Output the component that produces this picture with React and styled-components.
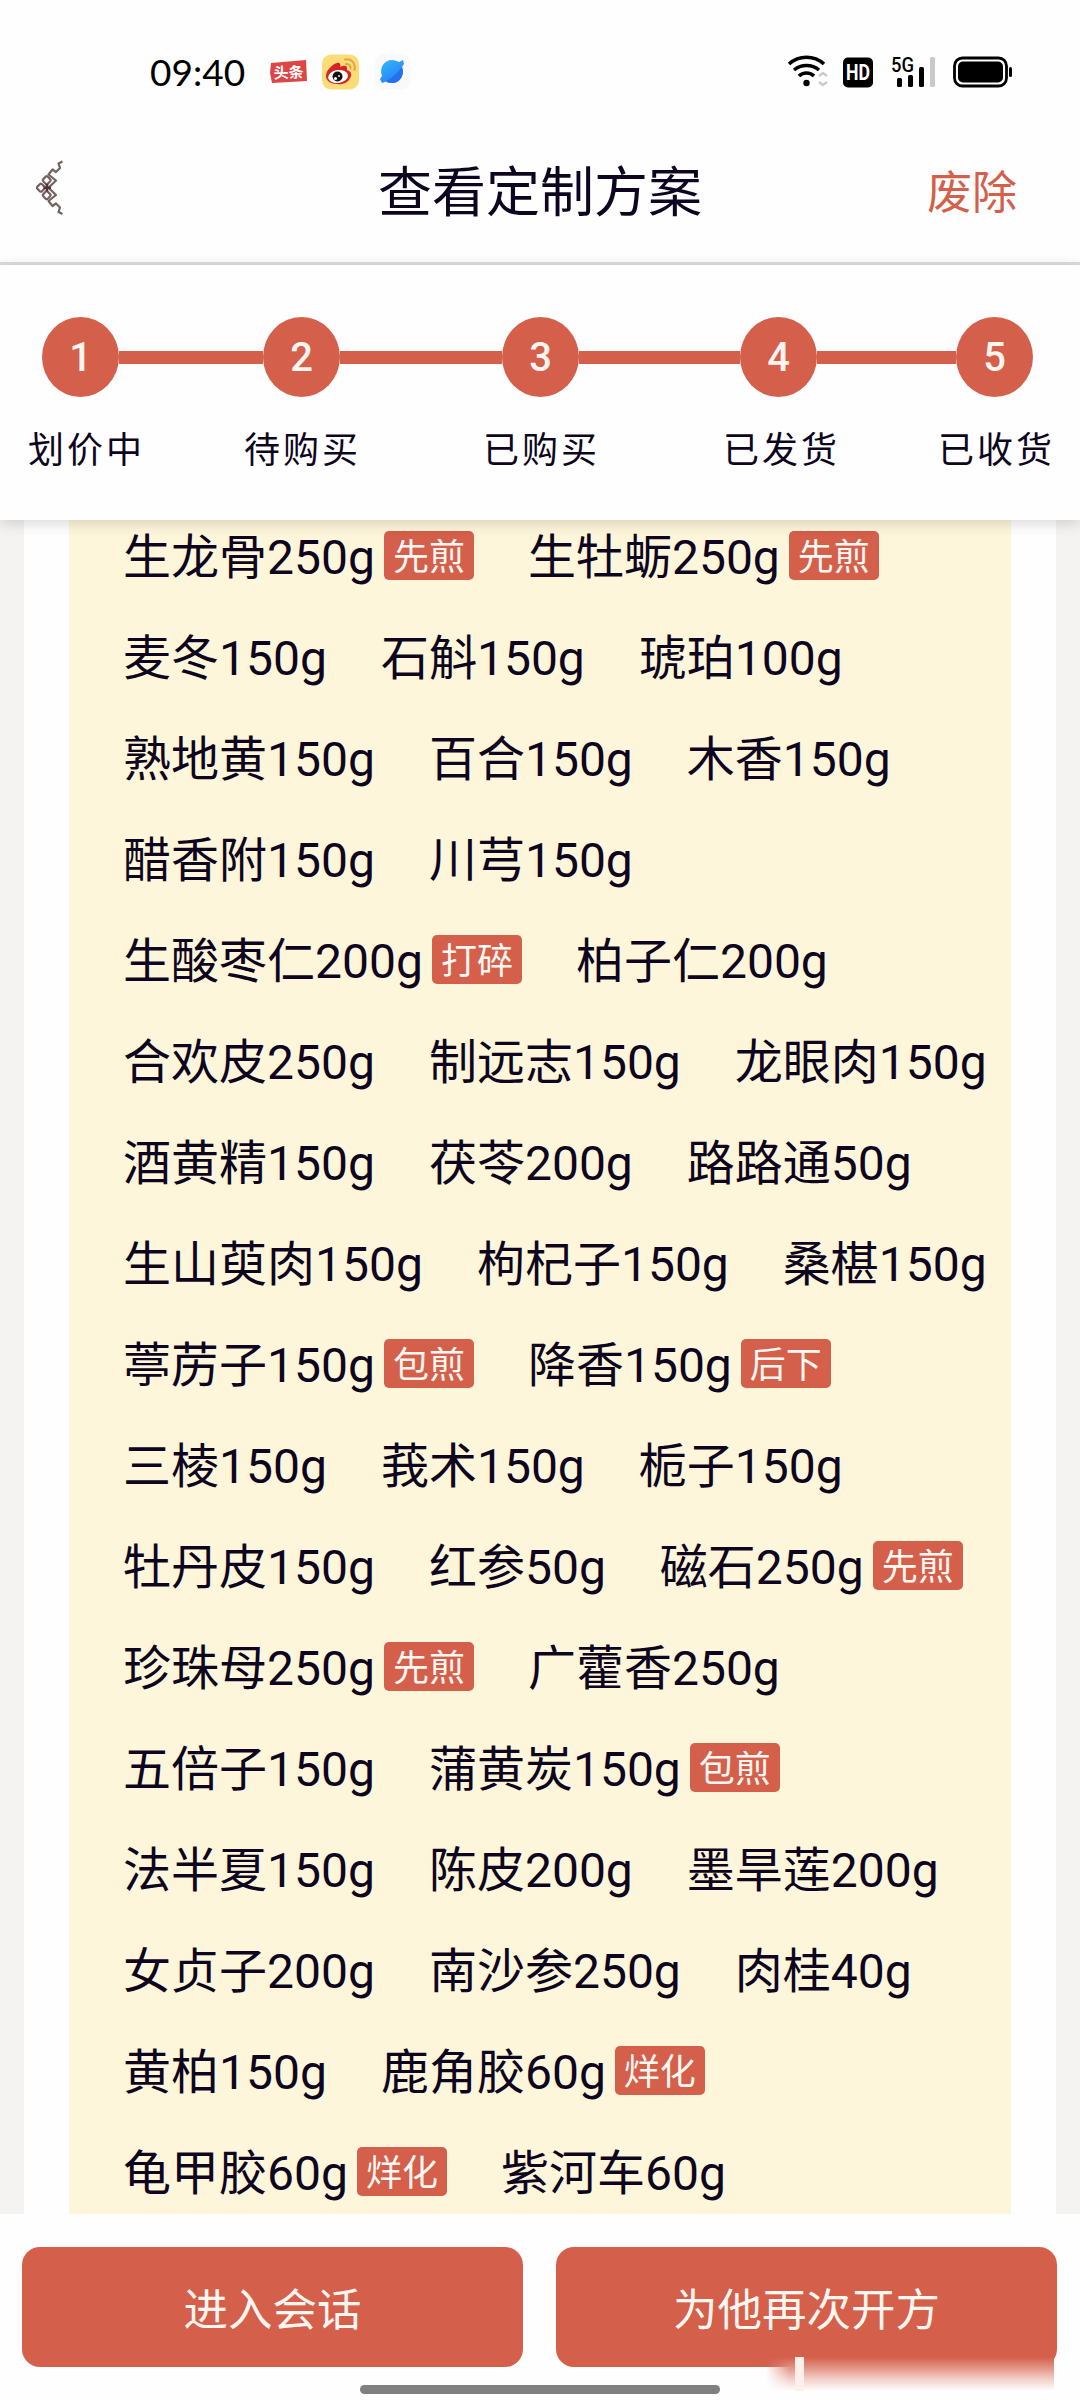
import styled, { createGlobalStyle } from "styled-components"

const GlobalStyle = createGlobalStyle`
body {
  margin: 0;
  background: #fefefe;
  font-family: Roboto, "Noto Sans CJK SC", sans-serif;
  color: #0e0620;
}
* {
  box-sizing: border-box;
}
`

const Page = styled.div`
width: 1080px;
height: 2400px;
display: flex;
flex-direction: column;
overflow: hidden;
background: #fefefe;
`

// status bar
const StatusBar = styled.div`
height: 120px;
display: flex;
align-items: center;
padding: 24px 67px 0 150px;
`
const Time = styled.span`
width: 119px;
font-family: Lato, sans-serif;
font-size: 37px;
line-height: 44px;
color: #000;
`
const AppIcons = styled.div`
display: flex;
align-items: center;
gap: 15px;
`
const Signals = styled.div`
display: flex;
align-items: center;
margin-left: auto;
`
const Signal = styled.svg`
display: block;
overflow: visible;
margin-left: ${props=>props.$gap}px;
`

// header
const Header = styled.header`
height: 145px;
display: grid;
grid-template-columns: 160px 1fr 160px;
align-items: center;
border-bottom: 3px solid #dcdedd;
`
const Back = styled.div`
padding-left: 36px;
margin-top: -3px;
`
const Title = styled.h1`
margin: 6px 0 0;
font-size: 54px;
line-height: 70px;
font-weight: 400;
text-align: center;
`
const Discard = styled.span`
margin-top: 6px;
font-size: 45px;
line-height: 60px;
color: #d45f4b;
padding-left: 7px;
`

// progress
const Progress = styled.section`
position: relative;
height: 255px;
flex-shrink: 0;
padding-top: 52px;
background: #fefefe;
box-shadow: 0 3px 14px rgba(0, 0, 0, 0.16);
`
const Track = styled.div`
display: flex;
align-items: center;
padding-left: 42px;
`
const Dot = styled.div`
width: 77px;
height: 80px;
border-radius: 50%;
background: #d45f4b;
color: #fff4ee;
font-family: Roboto, sans-serif;
font-size: 40px;
font-weight: 500;
display: flex;
align-items: center;
justify-content: center;
`
const Line = styled.div`
width: ${props=>props.$width}px;
height: 13px;
background: #d45f4b;
`
const Labels = styled.div`
display: grid;
grid-template-columns: 216px 239px 240px 215px 120px;
padding: 29px 0 0 28px;
font-size: 36px;
line-height: 50px;
letter-spacing: 3px;
`

// prescription
const Main = styled.main`
height: 1694px;
flex-shrink: 0;
padding: 0 24px;
background: #f4f3f2;
overflow: hidden;
`
const Card = styled.div`
height: 100%;
padding: 0 45px;
background: #fefefe;
`
const Herbs = styled.ul`
margin: 0;
height: 1720px;
padding: 0 0 0 54px;
list-style: none;
display: flex;
flex-wrap: wrap;
align-content: flex-start;
column-gap: 54px;
background: #fef6da;
`
const Herb = styled.li`
height: 101px;
display: flex;
align-items: flex-start;
padding-top: 8px;
font-size: 48px;
line-height: 60px;
white-space: nowrap;
`
const Tag = styled.span`
width: 90px;
height: 49px;
margin: 3px 0 0 9px;
border-radius: 5px;
background: #d45f4b;
color: #fff8f2;
font-size: 36px;
line-height: 54px;
text-align: center;
`

// footer
const Footer = styled.footer`
position: relative;
height: 186px;
flex-shrink: 0;
display: flex;
flex-direction: column;
align-items: center;
padding: 33px 23px 0 22px;
`
const Actions = styled.div`
width: 100%;
display: flex;
gap: 33px;
`
const Action = styled.button`
flex: 1;
height: 120px;
padding: 0 0 2px;
border: 0;
border-radius: 18px;
background: #d45f4b;
color: #fff6f0;
font-family: inherit;
font-size: 44.500px;
`
const HomeBar = styled.div`
width: 360px;
height: 9px;
margin-top: 18px;
border-radius: 5px;
background: #808080;
`
const Smear = styled.div`
position: absolute;
left: 766px;
top: 143px;
width: 288px;
height: 34px;
background: linear-gradient(#d45f4b, #e39a8c 35%, #f3cfc8 65%, #fefefe);
mask-image: linear-gradient(90deg, transparent, #000 24px);
`
const Streak = styled.div`
position: absolute;
left: 795px;
top: 143px;
width: 9px;
height: 34px;
background: #fdf0ea;
`

const steps = [
  { label: "划价中", line: 144 },
  { label: "待购买", line: 162 },
  { label: "已购买", line: 161 },
  { label: "已发货", line: 139 },
  { label: "已收货" },
]

const herbs = [
  ["生龙骨", 250, "先煎"], ["生牡蛎", 250, "先煎"],
  ["麦冬", 150], ["石斛", 150], ["琥珀", 100],
  ["熟地黄", 150], ["百合", 150], ["木香", 150],
  ["醋香附", 150], ["川芎", 150],
  ["生酸枣仁", 200, "打碎"], ["柏子仁", 200],
  ["合欢皮", 250], ["制远志", 150], ["龙眼肉", 150],
  ["酒黄精", 150], ["茯苓", 200], ["路路通", 50],
  ["生山萸肉", 150], ["枸杞子", 150], ["桑椹", 150],
  ["葶苈子", 150, "包煎"], ["降香", 150, "后下"],
  ["三棱", 150], ["莪术", 150], ["栀子", 150],
  ["牡丹皮", 150], ["红参", 50], ["磁石", 250, "先煎"],
  ["珍珠母", 250, "先煎"], ["广藿香", 250],
  ["五倍子", 150], ["蒲黄炭", 150, "包煎"],
  ["法半夏", 150], ["陈皮", 200], ["墨旱莲", 200],
  ["女贞子", 200], ["南沙参", 250], ["肉桂", 40],
  ["黄柏", 150], ["鹿角胶", 60, "烊化"],
  ["龟甲胶", 60, "烊化"], ["紫河车", 60],
]

const NewsIcon = () => (
  <svg width="38" height="38" viewBox="0 0 38 38">
    <path d="M2 10 L37 7 L38 28 L3 30 L1 20 Z" fill="#dd4546" />
    <text x="4.500" y="25" fontSize="15" fontWeight="700" fill="#fff" fontFamily="Noto Sans CJK SC" transform="rotate(-2 19 19)">头条</text>
  </svg>
)

const WeiboIcon = () => (
  <svg width="37" height="37" viewBox="0 0 37 37">
    <rect y="0.5" width="37" height="35" rx="9" fill="#fbdc76" />
    <path d="M4 22 C4 16 11 10 15 9 C18 8 19 11 18 13 C22 11 26 11 25 16 C28 17 30 19 29 22 C27 29 20 31 15 30 C9 30 4 27 4 22 Z" fill="#d8222a" />
    <ellipse cx="16" cy="22.500" rx="10" ry="6.500" fill="#fff" transform="rotate(-8 16 22)" />
    <circle cx="15.500" cy="22.500" r="5" fill="#111" />
    <circle cx="13.500" cy="24.500" r="1.600" fill="#fff" />
    <circle cx="17" cy="22" r="0.9" fill="#fff" />
    <path d="M23 5.500 C29 4 34 9 32.500 16 M24 10 C27 9.500 29 12 28.500 14.500" fill="none" stroke="#dda544" strokeWidth="2" strokeLinecap="round" />
  </svg>
)

const BrowserIcon = () => (
  <svg width="38" height="38" viewBox="0 0 38 38">
    <defs>
      <linearGradient id="sea" x1="0" y1="0" x2="0.6" y2="1">
        <stop offset="0" stopColor="#37b9fb" />
        <stop offset="1" stopColor="#2480f4" />
      </linearGradient>
    </defs>
    <rect x="1" y="1" width="36" height="36" rx="9" fill="#f9f9fa" />
    <path d="M18 7 C21 7 23 8 25 9 L29 7 L30 11 L28 14 C31 22 26 30 18 30 C15 30 13 29 12 28.500 L8 30 L6 26 L8 23 C5 15 10 7 18 7 Z" fill="url(#sea)" />
    <path d="M28 14 C31 22 26 30 18 30 C15 30 13 29 12 28.500 C18 25 24 20 28 14 Z" fill="#256ff0" />
  </svg>
)

const BackIcon = () => (
  <svg width="28" height="60" viewBox="0 0 28 60" fill="none" stroke="#75625f" strokeWidth="2.200" strokeLinejoin="round">
    <path d="M26.500 3.500 L22.500 5.500 L24 10 L20 14 L16.500 11.500 L12.500 16.500 L20 22.500 L12.500 29.700 L20 37 L12.500 43 L16.500 48 L20 45.500 L24 49.500 L22.500 54 L26.500 56" />
    <rect x="1.700" y="26.500" width="6.400" height="6.400" rx="1.500" transform="rotate(45 4.900 29.700)" />
    <rect x="7.500" y="19" width="6.400" height="6.400" rx="1.500" transform="rotate(45 10.700 22.200)" />
    <rect x="7.500" y="34" width="6.400" height="6.400" rx="1.500" transform="rotate(45 10.700 37.200)" />
    <path d="M7.500 29.700 L15 29.700 M11 26 L11 33.500" stroke="#4f3538" strokeWidth="2.600" />
  </svg>
)

const StatusIcons = () => (
  <Signals>
    <Signal width="40" height="32" viewBox="0 0 40 32" fill="none" stroke="#000" strokeWidth="3.6">
      <path d="M1 8 C11 -1 26 -1 36 8 M6 14 C13 8 24 8 31 14 M11 20 C15 16 22 16 26 20" />
      <circle cx="18.500" cy="27" r="3.200" fill="#000" stroke="none" />
      <path d="M31 20 L35 17 L39 20 M31 26 L35 29 L39 26" stroke="#ccc" strokeWidth="2.500" />
    </Signal>
    <Signal $gap={15} width="31" height="31" viewBox="0 0 31 31">
      <rect width="30" height="30" y="0.5" rx="5" fill="#000" />
      <text x="15" y="23" fontSize="22" fontWeight="700" textAnchor="middle" textLength="24" lengthAdjust="spacingAndGlyphs" fill="#fff" fontFamily="Roboto">HD</text>
    </Signal>
    <Signal $gap={17} width="45" height="32" viewBox="0 0 45 32">
      <text x="0" y="15.500" fontSize="20" fontWeight="500" textLength="23" lengthAdjust="spacingAndGlyphs" fontFamily="Roboto">5G</text>
      <rect x="6" y="22" width="5" height="9" rx="1.500" />
      <rect x="17" y="19" width="5" height="12" rx="1.500" />
      <rect x="28" y="11" width="5" height="20" rx="1.500" />
      <rect x="39" y="1" width="5" height="30" rx="1.500" fill="#c9c9c9" />
    </Signal>
    <Signal $gap={17} width="60" height="32" viewBox="0 0 60 32">
      <rect x="1.500" y="2" width="52" height="28" rx="8" fill="none" stroke="#000" strokeWidth="2.800" />
      <rect x="5" y="5.500" width="45" height="21" rx="5" />
      <rect x="56" y="11" width="3" height="10" rx="1.500" />
    </Signal>
  </Signals>
)

const App = () => {
  return (
    <Page>
      <GlobalStyle />
      <StatusBar>
        <Time>09:40</Time>
        <AppIcons>
          <NewsIcon />
          <WeiboIcon />
          <BrowserIcon />
        </AppIcons>
        <StatusIcons />
      </StatusBar>

      <Header>
        <Back><BackIcon /></Back>
        <Title>查看定制方案</Title>
        <Discard>废除</Discard>
      </Header>

      <Progress>
        <Track>
          {steps.map((step, i) => [
            <Dot key={step.label}>{i + 1}</Dot>,
            step.line && <Line key={i} $width={step.line} />,
          ])}
        </Track>
        <Labels>
          {steps.map((step) => <span key={step.label}>{step.label}</span>)}
        </Labels>
      </Progress>

      <Main>
        <Card>
          <Herbs>
            {herbs.map(([name, grams, tag]) => (
              <Herb key={name}>
                {name}{grams}g
                {tag && <Tag>{tag}</Tag>}
              </Herb>
            ))}
          </Herbs>
        </Card>
      </Main>

      <Footer>
        <Actions>
          <Action>进入会话</Action>
          <Action>为他再次开方</Action>
        </Actions>
        <HomeBar />
        <Smear />
        <Streak />
      </Footer>
    </Page>
  )
}

export default App
